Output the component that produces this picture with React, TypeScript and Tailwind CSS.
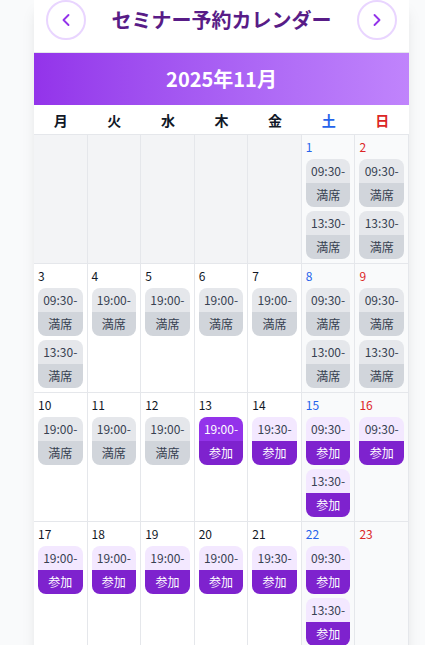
import { ChevronLeft, ChevronRight } from 'lucide-react';

type Slot = { time: string; status: 'full' | 'open' | 'selected' };
type Day = { date?: number; slots: Slot[] };

const full = (time: string): Slot => ({ time, status: 'full' });
const open = (time: string): Slot => ({ time, status: 'open' });

const WEEKDAYS = ['月', '火', '水', '木', '金', '土', '日'];

const DAYS: Day[] = [
  { slots: [] },
  { slots: [] },
  { slots: [] },
  { slots: [] },
  { slots: [] },
  { date: 1, slots: [full('09:30'), full('13:30')] },
  { date: 2, slots: [full('09:30'), full('13:30')] },
  { date: 3, slots: [full('09:30'), full('13:30')] },
  { date: 4, slots: [full('19:00')] },
  { date: 5, slots: [full('19:00')] },
  { date: 6, slots: [full('19:00')] },
  { date: 7, slots: [full('19:00')] },
  { date: 8, slots: [full('09:30'), full('13:00')] },
  { date: 9, slots: [full('09:30'), full('13:30')] },
  { date: 10, slots: [full('19:00')] },
  { date: 11, slots: [full('19:00')] },
  { date: 12, slots: [full('19:00')] },
  { date: 13, slots: [{ time: '19:00', status: 'selected' }] },
  { date: 14, slots: [open('19:30')] },
  { date: 15, slots: [open('09:30'), open('13:30')] },
  { date: 16, slots: [open('09:30')] },
  { date: 17, slots: [open('19:00')] },
  { date: 18, slots: [open('19:00')] },
  { date: 19, slots: [open('19:00')] },
  { date: 20, slots: [open('19:00')] },
  { date: 21, slots: [open('19:30')] },
  { date: 22, slots: [open('09:30'), open('13:30')] },
  { date: 23, slots: [] },
];

function SlotChip({ slot }: { slot: Slot }) {
  const top =
    slot.status === 'full'
      ? 'bg-[#e5e7eb] text-[#374151]'
      : slot.status === 'selected'
        ? 'bg-[#9333ea] text-white'
        : 'bg-[#f3e8ff] text-[#374151]';
  const bottom =
    slot.status === 'full'
      ? 'bg-[#d1d5db] text-[#374151]'
      : 'bg-[#7e22ce] text-white';

  return (
    <div className="overflow-hidden rounded-lg text-center text-xs">
      <div className={`py-1 ${top}`}>{slot.time}-</div>
      <div className={`py-1 ${bottom}`}>
        {slot.status === 'full' ? '満席' : '参加'}
      </div>
    </div>
  );
}

export default function App() {
  return (
    <div
      className="min-h-screen bg-[#f9fafb]"
      style={{ fontFamily: '"Noto Sans CJK JP", "Noto Sans", sans-serif' }}
    >
      <div className="ml-[34px] w-[375px] bg-white shadow-lg">
        <header className="flex items-center justify-between border-b border-[#e5e7eb] px-3 pb-3">
          <button className="flex h-10 w-10 items-center justify-center rounded-full border-2 border-[#e9d5ff] bg-white text-[#9333ea]">
            <ChevronLeft size={20} strokeWidth={2.25} />
          </button>
          <h1 className="text-[20px] font-bold leading-7 text-[#581c87]">
            セミナー予約カレンダー
          </h1>
          <button className="flex h-10 w-10 items-center justify-center rounded-full border-2 border-[#e9d5ff] bg-white text-[#9333ea]">
            <ChevronRight size={20} strokeWidth={2.25} />
          </button>
        </header>

        <div className="flex h-[52px] items-center justify-center bg-linear-to-r from-[#9333ea] to-[#c084fc] text-[20px] font-bold text-white">
          2025年11月
        </div>

        <div className="grid h-[30px] grid-cols-7 items-center border-b border-[#e5e7eb] text-center text-sm font-bold">
          {WEEKDAYS.map((w, i) => (
            <div
              key={w}
              className={
                i === 5
                  ? 'text-[#2563eb]'
                  : i === 6
                    ? 'text-[#dc2626]'
                    : 'text-[#111827]'
              }
            >
              {w}
            </div>
          ))}
        </div>

        <div className="grid grid-cols-7">
          {DAYS.map((day, i) => {
            const col = i % 7;
            const bg = !day.date
              ? 'bg-[#f3f4f6]'
              : col >= 5
                ? 'bg-[#f9fafb]'
                : 'bg-white';
            const color =
              col === 5
                ? 'text-[#2563eb]'
                : col === 6
                  ? 'text-[#dc2626]'
                  : 'text-[#111827]';
            return (
              <div
                key={i}
                className={`flex flex-col gap-1 border-r border-b border-[#e5e7eb] p-1 ${bg}`}
              >
                {day.date && (
                  <div className={`text-xs leading-4 ${color}`}>{day.date}</div>
                )}
                {day.slots.map((s) => (
                  <SlotChip key={s.time} slot={s} />
                ))}
              </div>
            );
          })}
        </div>
      </div>
    </div>
  );
}
